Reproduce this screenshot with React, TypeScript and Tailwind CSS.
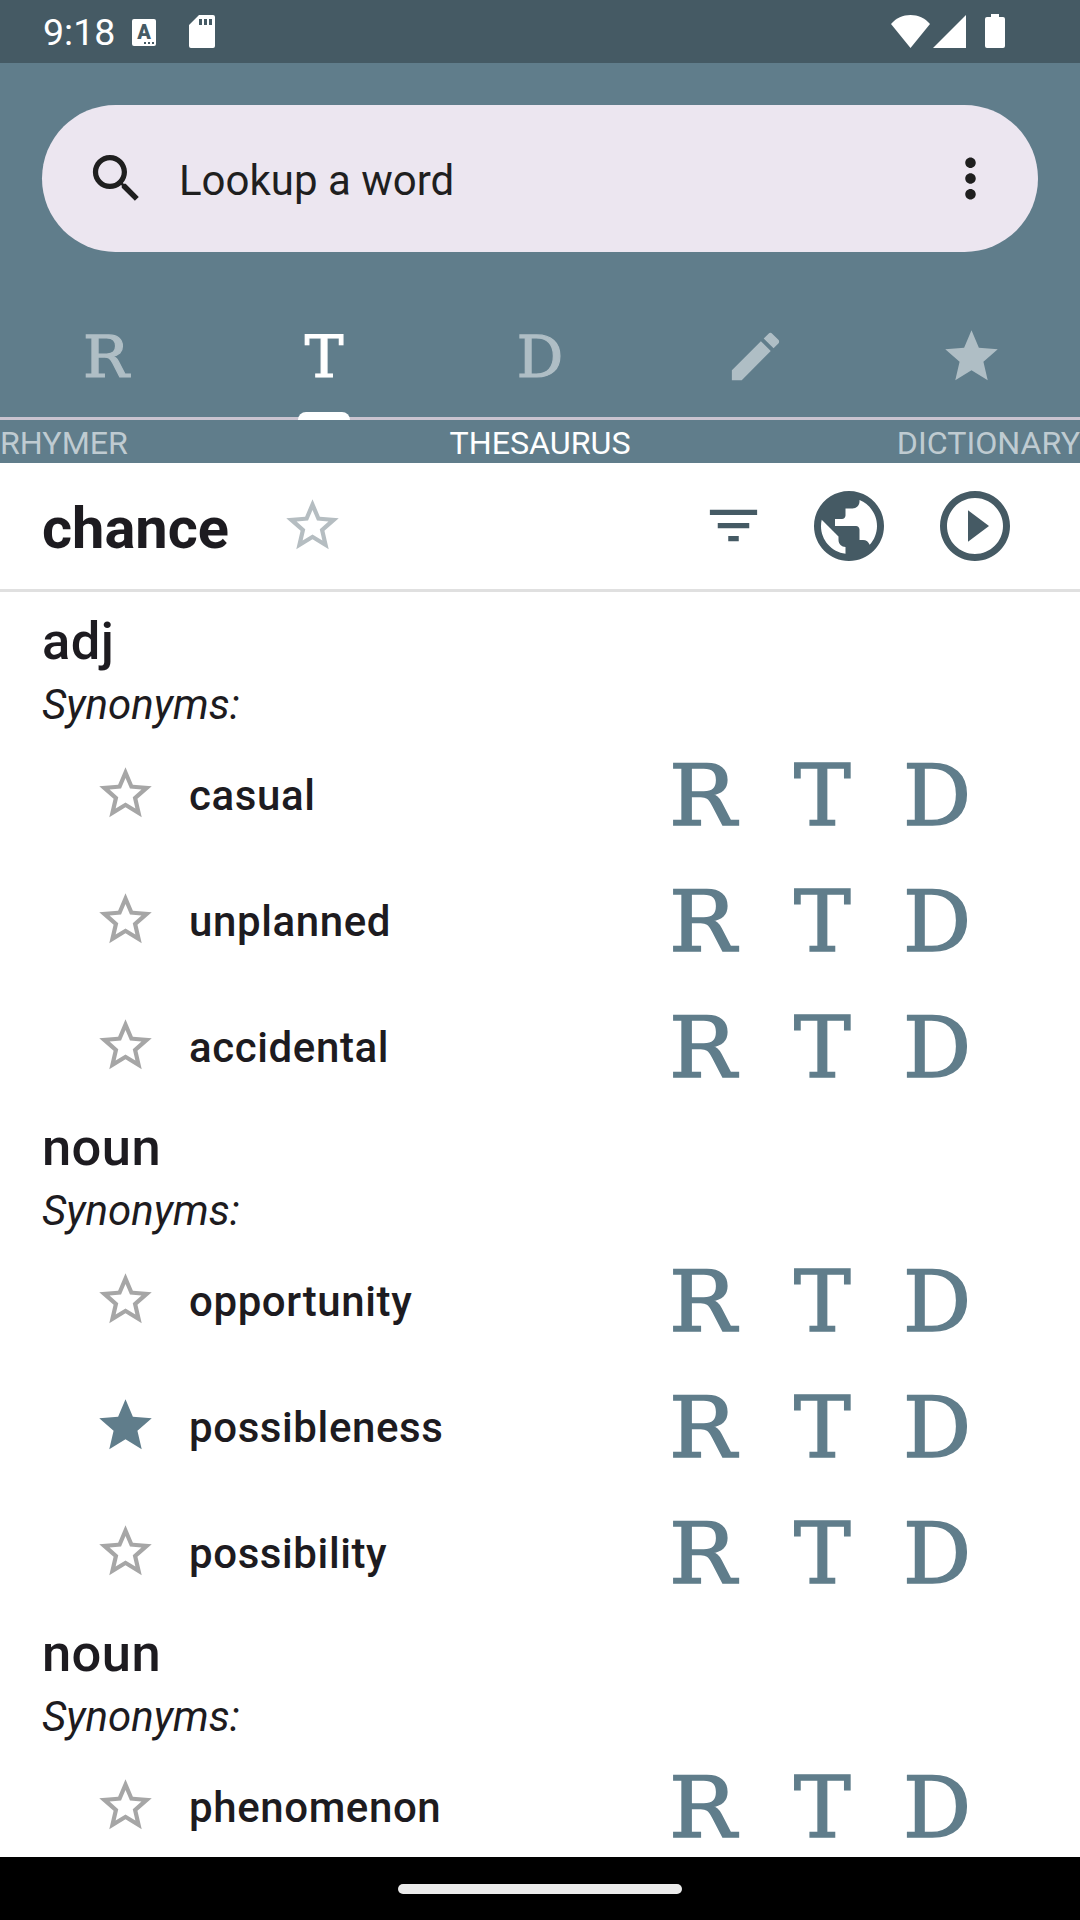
import React from "react";

type IconProps = { d: string; className: string };

function Icon({ d, className }: IconProps) {
  return (
    <svg viewBox="0 0 24 24" fill="currentColor" className={className} aria-hidden="true">
      <path d={d} />
    </svg>
  );
}

const paths = {
  search:
    "M15.5 14h-.79l-.28-.27C15.41 12.59 16 11.11 16 9.5 16 5.91 13.09 3 9.5 3S3 5.91 3 9.5 5.91 16 9.5 16c1.61 0 3.09-.59 4.23-1.57l.27.28v.79l5 4.99L20.49 19l-4.99-5zm-6 0C7.01 14 5 11.99 5 9.5S7.01 5 9.5 5 14 7.01 14 9.5 11.99 14 9.5 14z",
  more: "M12 8c1.1 0 2-.9 2-2s-.9-2-2-2-2 .9-2 2 .9 2 2 2zm0 2c-1.1 0-2 .9-2 2s.9 2 2 2 2-.9 2-2-.9-2-2-2zm0 6c-1.1 0-2 .9-2 2s.9 2 2 2 2-.9 2-2-.9-2-2-2z",
  pencil:
    "M3 17.25V21h3.75L17.81 9.94l-3.75-3.75L3 17.25zM20.71 7.04c.39-.39.39-1.02 0-1.41l-2.34-2.34c-.39-.39-1.02-.39-1.41 0l-1.83 1.83 3.75 3.75 1.83-1.83z",
  star: "M12 17.27L18.18 21l-1.64-7.03L22 9.24l-7.19-.61L12 2 9.19 8.63 2 9.24l5.46 4.73L5.82 21z",
  starOutline:
    "M22 9.24l-7.19-.62L12 2 9.19 8.63 2 9.24l5.46 4.73L5.82 21 12 17.27 18.18 21l-1.63-7.03L22 9.24zM12 15.4l-3.76 2.27 1-4.28-3.32-2.88 4.38-.38L12 6.1l1.71 4.04 4.38.38-3.32 2.88 1 4.28L12 15.4z",
  filter: "M10 18h4v-2h-4v2zM3 6v2h18V6H3zm3 7h12v-2H6v2z",
  globe:
    "M12 2C6.48 2 2 6.48 2 12s4.48 10 10 10 10-4.48 10-10S17.52 2 12 2zm-1 17.93c-3.95-.49-7-3.85-7-7.93 0-.62.08-1.21.21-1.79L9 15v1c0 1.1.9 2 2 2v1.93zm6.9-2.54c-.26-.81-1-1.39-1.9-1.39h-1v-3c0-.55-.45-1-1-1H8v-2h2c.55 0 1-.45 1-1V7h2c1.1 0 2-.9 2-2v-.41c2.93 1.19 5 4.06 5 7.41 0 2.08-.8 3.97-2.1 5.39z",
  play: "M10 16.5l6-4.5-6-4.5v9zM12 2C6.48 2 2 6.48 2 12s4.48 10 10 10 10-4.48 10-10S17.52 2 12 2zm0 18c-4.41 0-8-3.59-8-8s3.59-8 8-8 8 3.59 8 8-3.59 8-8 8z",
};

const letterFont = "font-['DejaVu_Serif',serif] [stroke-linejoin:round]";

function StatusBar() {
  return (
    <div className="flex h-[63px] shrink-0 items-center bg-[#455a64] pl-[43px] text-white">
      <span className="w-[73px] text-[37.5px] leading-[64px]">9:18</span>
      <div className="relative ml-4 mt-px h-[27px] w-6 rounded-[2px] bg-white">
        <span className="block text-center text-[20px] leading-[26px] font-black text-[#455a64]">A</span>
        <div className="absolute right-[2px] bottom-[2px] flex gap-[2px]">
          <i className="size-[2px] bg-[#455a64]" />
          <i className="size-[2px] bg-[#455a64]" />
          <i className="size-[2px] bg-[#455a64]" />
        </div>
      </div>
      <svg viewBox="0 0 26 33" fill="currentColor" className="ml-[33px] h-[33px] w-[26px]">
        <path
          fillRule="evenodd"
          d="M10 0h14a2 2 0 0 1 2 2v29a2 2 0 0 1-2 2H2a2 2 0 0 1-2-2V10zM10 4v6h3V4zm5 0v6h3V4zm5 0v6h3V4z"
        />
      </svg>
      <svg viewBox="0 0 39 33" fill="currentColor" className="-mt-px ml-auto h-[33px] w-[39px]">
        <path d="M19.5 33L0 9C5 3 12 0 19.500 0S34 3 39 9z" />
      </svg>
      <svg viewBox="0 0 33 33" fill="currentColor" className="-mt-px ml-[3px] size-[33px]">
        <path d="M0 33L33 0v33z" />
      </svg>
      <svg viewBox="0 0 20 34" fill="currentColor" className="-mt-px mr-[75px] ml-[19px] h-[34px] w-5">
        <path d="M6 0h8v3h4a2 2 0 0 1 2 2v27a2 2 0 0 1-2 2H2a2 2 0 0 1-2-2V5a2 2 0 0 1 2-2h4z" />
      </svg>
    </div>
  );
}

function SearchBar() {
  return (
    <div className="mx-[42px] mt-[42px] flex h-[147px] shrink-0 items-center rounded-full bg-[#ece6f0] pr-9 pl-[43px] text-[#1f1f1f]">
      <Icon d={paths.search} className="size-[63px]" />
      <span className="ml-[31px] pt-1 text-[42px] leading-none">Lookup a word</span>
      <Icon d={paths.more} className="ml-auto size-[63px]" />
    </div>
  );
}

function Tabs() {
  const letter = `${letterFont} block text-[58px] leading-[64px] [-webkit-text-stroke:1.2px]`;
  return (
    <div className="mt-[42px] grid h-[126px] shrink-0 grid-cols-5 border-b-[3px] border-[#cac4d0] text-[#afbec5]">
      <div className="flex justify-center pt-[31px] pr-1">
        <span className={`${letter} scale-x-105`}>R</span>
      </div>
      <div className="relative flex justify-center pt-[31px] text-white">
        <span className={letter}>T</span>
        <div className="absolute -bottom-[3px] left-[82px] h-2 w-[52px] rounded-t-lg bg-white" />
      </div>
      <div className="flex justify-center pt-[31px]">
        <span className={letter}>D</span>
      </div>
      <div className="flex justify-center pt-[31px] pr-px">
        <Icon d={paths.pencil} className="size-[63px]" />
      </div>
      <div className="flex justify-center pt-[31px] pr-px">
        <Icon d={paths.star} className="size-[63px]" />
      </div>
    </div>
  );
}

function TitleStrip() {
  return (
    <div className="grid h-[43px] shrink-0 grid-cols-3 text-[32.2px] leading-[46px] text-[#bfcbd1]">
      <span>RHYMER</span>
      <span className="text-center text-white">THESAURUS</span>
      <span className="text-right">DICTIONARY</span>
    </div>
  );
}

function WordHeader() {
  return (
    <div className="flex h-[129px] shrink-0 items-center border-b-[3px] border-[#e0e0e0] pl-[42px] text-[#455a64]">
      <h1 className="w-[239px] pt-[6px] text-[57.75px] leading-none font-bold text-[#1d1b20]">chance</h1>
      <Icon d={paths.starOutline} className="-mt-px size-[63px] text-[#b5bdc1]" />
      <Icon d={paths.filter} className="-mt-px ml-auto size-[63px]" />
      <Icon d={paths.globe} className="ml-[42px] size-[84px]" />
      <Icon d={paths.play} className="mr-[63px] ml-[42px] size-[84px]" />
    </div>
  );
}

function Row({ word, starred }: { word: string; starred?: boolean }) {
  const letter = `${letterFont} block text-[85px] leading-[126px] pt-[3px] [-webkit-text-stroke:1.6px]`;
  return (
    <div className="flex h-[126px] items-center pl-[94px]">
      <Icon
        d={starred ? paths.star : paths.starOutline}
        className={starred ? "-mt-px size-[63px] text-[#607d8b]" : "-mt-px size-[63px] text-[#a6a6a6]"}
      />
      <span className="ml-8 w-[480px] pt-[3px] text-[42px] leading-none font-medium tracking-[0.6px]">{word}</span>
      <div className="flex text-[#607d8b]">
        <div className="w-[125px]">
          <span className={`${letter} w-fit origin-left scale-x-105`}>R</span>
        </div>
        <div className="w-[109px]">
          <span className={`${letter} w-fit`}>T</span>
        </div>
        <span className={letter}>D</span>
      </div>
    </div>
  );
}

type Entry = { pos: string; words: { word: string; starred?: boolean }[] };

const entries: Entry[] = [
  { pos: "adj", words: [{ word: "casual" }, { word: "unplanned" }, { word: "accidental" }] },
  { pos: "noun", words: [{ word: "opportunity" }, { word: "possibleness", starred: true }, { word: "possibility" }] },
  { pos: "noun", words: [{ word: "phenomenon" }] },
];

export default function App() {
  return (
    <div className="flex h-[1920px] w-[1080px] flex-col overflow-hidden bg-white font-[Roboto,sans-serif] text-[#1d1b20]">
      <StatusBar />
      <header className="flex h-[400px] shrink-0 flex-col bg-[#607d8b]">
        <SearchBar />
        <Tabs />
        <TitleStrip />
      </header>
      <WordHeader />
      <main className="min-h-0 flex-1 overflow-hidden pt-[11px]">
        {entries.map((entry, i) => (
          <section key={i}>
            <h2 className="h-[73px] pl-[42px] text-[52.5px] leading-[76px] font-medium tracking-[0.4px]">{entry.pos}</h2>
            <p className="h-[55px] pl-[42px] text-[42px] leading-[57px] italic">Synonyms:</p>
            {entry.words.map((w) => (
              <Row key={w.word} word={w.word} starred={w.starred} />
            ))}
          </section>
        ))}
      </main>
      <footer className="flex h-[63px] shrink-0 justify-center bg-black pt-[27px]">
        <div className="h-[10px] w-[284px] rounded-full bg-[#ebebeb]" />
      </footer>
    </div>
  );
}
